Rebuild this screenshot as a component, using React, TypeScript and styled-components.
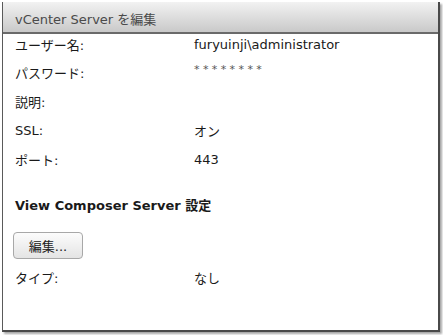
import React from "react";
import styled, { createGlobalStyle } from "styled-components";

const GlobalStyle = createGlobalStyle`
  html, body {
    margin: 0;
    padding: 0;
    background: #ffffff;
  }
  body {
    font-family: "DejaVu Sans", "Noto Sans CJK JP", sans-serif;
  }
`;

const rows = [
  { label: "ユーザー名:", value: "furyuinji\\administrator" },
  { label: "パスワード:", value: "********", masked: true },
  { label: "説明:", value: "" },
  { label: "SSL:", value: "オン" },
  { label: "ポート:", value: "443" },
];

const App = () => {
  return (
    <>
      <GlobalStyle />
      <Page>
        <Dialog>
          <Header>vCenter Server を編集</Header>
          <Body>
            <Fields>
              {rows.map((r) => (
                <Row key={r.label}>
                  <Label>{r.label}</Label>
                  {r.masked ? <Masked>{r.value}</Masked> : <Value>{r.value}</Value>}
                </Row>
              ))}
            </Fields>
            <SectionTitle>View Composer Server 設定</SectionTitle>
            <EditButton>編集...</EditButton>
            <Row $gap={8}>
              <Label>タイプ:</Label>
              <Value>なし</Value>
            </Row>
          </Body>
        </Dialog>
      </Page>
    </>
  );
};

const Page = styled.div`
  width: 443px;
  height: 335px;
  padding: 2px 3px 3px 2px;
  box-sizing: border-box;
  background: #ffffff;
`;

const Dialog = styled.div`
  width: 100%;
  height: 100%;
  box-sizing: border-box;
  background: #ffffff;
  border-left: 1px solid #5a5a5a;
  border-right: 2px solid #4a4a4a;
  border-bottom: 2px solid #4a4a4a;
  box-shadow: 2px 2px 2px rgba(0, 0, 0, 0.35);
  display: flex;
  flex-direction: column;
`;

const Header = styled.div`
  height: 32px;
  box-sizing: border-box;
  padding: 7px 0 0 12px;
  background: linear-gradient(#f2f2f2, #c9c9c9);
  border-bottom: 2px solid #6a6a6a;
  color: #4a4a4a;
  font-size: 13px;
`;

const Body = styled.div`
  padding: 0 0 0 12px;
  display: flex;
  flex-direction: column;
`;

const Fields = styled.div`
  display: flex;
  flex-direction: column;
  gap: 8.8px;
`;

const Row = styled.div<{ $gap?: number }>`
  display: grid;
  grid-template-columns: 179px 1fr;
  height: 20px;
  align-items: center;
  margin-top: ${(p) => p.$gap ?? 0}px;
  font-size: 13px;
  color: #1a1a1a;
`;

const Label = styled.span``;

const Value = styled.span``;

const Masked = styled.span`
  font-size: 11px;
  letter-spacing: 3.4px;
  color: #555;
  position: relative;
  top: -3px;
`;

const SectionTitle = styled.div`
  margin-top: 29px;
  height: 16px;
  line-height: 16px;
  font-size: 13px;
  font-weight: bold;
  color: #1a1a1a;
`;

const EditButton = styled.button`
  margin: 18px 0 0 -2px;
  width: 70px;
  height: 27px;
  border: 1px solid #a8a8a8;
  border-radius: 4px;
  background: linear-gradient(#fcfcfc, #e4e4e4);
  font-family: "DejaVu Sans", "Noto Sans CJK JP", sans-serif;
  font-size: 13px;
  color: #222;
  padding: 0;
`;

export default App;
